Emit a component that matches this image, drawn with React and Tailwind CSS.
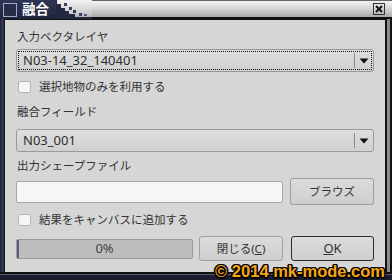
import React from "react";

const F = "font-['Noto_Sans','Noto_Sans_CJK_JP',sans-serif]";

function Arrow() {
  return (
    <svg width="10" height="6" viewBox="0 0 10 6">
      <polygon points="0.5,0.5 9.5,0.5 5,5.5" fill="#111" />
    </svg>
  );
}

function Combo({ text, focus }) {
  return (
    <div className="relative h-[23px] rounded-[3px] border border-[#9a9a9a] bg-gradient-to-b from-[#dedede] to-[#d0d0d0] flex items-center">
      <span className="flex-1 pl-[6px] text-[13px] leading-none text-[#2e2e2e]">{text}</span>
      <div className="w-px h-[15px] bg-[#8c8c8c]" />
      <div className="w-[18px] flex items-center justify-center pt-[1px]">
        <Arrow />
      </div>
      {focus && (
        <div className="absolute inset-[1px] border border-dotted border-[#111] rounded-[1px] pointer-events-none" />
      )}
    </div>
  );
}

function Check({ label }) {
  return (
    <div className="h-[16px] flex items-center">
      <div className="ml-[2px] w-[13px] h-[12px] rounded-[2px] border border-[#b4b4b4] bg-[#f6f6f6]" />
      <span className="ml-[8px] text-[11.5px] leading-none text-[#333]">{label}</span>
    </div>
  );
}

function Label({ children }) {
  return <div className="h-[16px] leading-[16px] text-[11.5px] text-[#333] pl-[1px]">{children}</div>;
}

export default function App() {
  return (
    <div className={`${F} relative w-[392px] h-[280px] overflow-hidden bg-[#23283f] flex flex-col`}>
      {/* Title bar */}
      <div className="h-[19px] flex shrink-0">
        <div className="w-[56px] h-full bg-gradient-to-b from-[#2f3557] to-[#20253d] flex items-center">
          <div className="ml-[3px] w-[14px] h-[14px] border border-[#a4aac2] bg-[#272c48]" />
          <span className="ml-[5px] text-[13.5px] font-bold text-white leading-none">融合</span>
        </div>
        <svg width="36" height="19" viewBox="0 0 36 19" className="shrink-0">
          <defs>
            <linearGradient id="tg" x1="0" y1="0" x2="0" y2="1">
              <stop offset="0" stopColor="#f2f2f2" />
              <stop offset="0.6" stopColor="#d2d2d2" />
              <stop offset="1" stopColor="#a9a9a9" />
            </linearGradient>
          </defs>
          <rect width="36" height="19" fill="url(#tg)" />
          <polygon
            points="0,0 1,0 1,4 5,4 5,8 9,8 9,11 13,11 13,14 19,14 19,17 36,17 36,19 0,19"
            fill="#23283f"
          />
          <rect x="8" y="3" width="3" height="3" fill="#3b4160" />
          <rect x="13" y="7" width="3" height="3" fill="#3b4160" />
          <rect x="17" y="10" width="3" height="3" fill="#2c3250" />
          <rect x="23" y="13" width="3" height="3" fill="#3b4160" />
          <rect x="28" y="14" width="3" height="2" fill="#555a70" />
        </svg>
        <div className="flex-1 h-full flex flex-col">
          <div className="flex-1 bg-gradient-to-b from-[#f2f2f2] via-[#d4d4d4] to-[#a9a9a9] flex items-center justify-end pr-[7px] border-t border-[#666]">
            <div className="w-[12px] h-[12px] border border-[#333] bg-gradient-to-b from-[#e8e8e8] to-[#bcbcbc] flex items-center justify-center">
              <svg width="8" height="8" viewBox="0 0 8 8">
                <path d="M1 1L7 7M7 1L1 7" stroke="#111" strokeWidth="2" />
              </svg>
            </div>
          </div>
          <div className="h-[2px] bg-[#111]" />
        </div>
      </div>

      {/* Body */}
      <div className="flex-1 flex">
        <div className="w-[5px] bg-gradient-to-r from-[#1b1f33] via-[#363c5c] to-[#111]" />
        <div className="flex-1 bg-[#d6d6d6] border-t border-[#111] px-[11px] flex flex-col">
          <div className="mt-[9px]">
            <Label>入力ベクタレイヤ</Label>
          </div>
          <div className="mt-[4px]">
            <Combo text="N03-14_32_140401" focus />
          </div>
          <div className="mt-[7px]">
            <Check label="選択地物のみを利用する" />
          </div>
          <div className="mt-[9px]">
            <Label>融合フィールド</Label>
          </div>
          <div className="mt-[9px]">
            <Combo text="N03_001" />
          </div>
          <div className="mt-[6px]">
            <Label>出力シェープファイル</Label>
          </div>
          <div className="mt-[4px] h-[27px] flex items-center">
            <div className="w-[267px] h-[22px] rounded-[2px] border border-[#a6a6a6] bg-[#f6f6f6]" />
            <button className="ml-[7px] flex-1 h-[27px] rounded-[3px] border border-[#9c9c9c] bg-gradient-to-b from-[#dcdcdc] to-[#cecece] text-[11.5px] text-[#333] leading-none">
              ブラウズ
            </button>
          </div>
          <div className="mt-[7px]">
            <Check label="結果をキャンバスに追加する" />
          </div>
          <div className="mt-[8px] h-[25px] flex items-center">
            <div className="relative w-[177px] h-[20px] rounded-[2px] border border-[#9a9a9a] bg-[#bdbdbd] flex items-center justify-center">
              <div className="absolute left-0 top-0 bottom-0 w-[2px] bg-[#58607e]" />
              <span className="text-[13px] leading-none text-[#444]">0%</span>
            </div>
            <button className="ml-[6px] w-[84px] h-[25px] rounded-[3px] border border-[#a0a0a0] bg-gradient-to-b from-[#dcdcdc] to-[#cecece] text-[11.5px] text-[#333] leading-none">
              閉じる(<span className="underline">C</span>)
            </button>
            <button className="ml-[8px] flex-1 h-[25px] rounded-[3px] border border-[#2a2a2a] bg-gradient-to-b from-[#dcdcdc] to-[#cecece] text-[13px] text-[#333] leading-none">
              <span className="underline">O</span>K
            </button>
          </div>
        </div>
        <div className="w-[7px] flex">
          <div className="w-[2px] bg-[#111]" />
          <div className="w-[3px] bg-[#8a8a8a]" />
          <div className="w-[2px] bg-[#111]" />
        </div>
      </div>
      <div className="h-[8px] flex flex-col shrink-0">
        <div className="h-[2px] bg-[#111]" />
        <div className="h-[1px] bg-[#555a70]" />
        <div className="flex-1 bg-[#1a1d2e]" />
      </div>

      {/* Watermark */}
      <div className="absolute right-[7px] bottom-[0px] font-['Liberation_Sans',sans-serif] font-bold text-[16.5px] leading-[18px] text-[#f4a615] [text-shadow:1.5px_0_0_#000,-1.5px_0_0_#000,0_1.5px_0_#000,0_-1.5px_0_#000,1px_1px_0_#000,-1px_-1px_0_#000,1px_-1px_0_#000,-1px_1px_0_#000]">
        © 2014 mk-mode.com
      </div>
    </div>
  );
}
